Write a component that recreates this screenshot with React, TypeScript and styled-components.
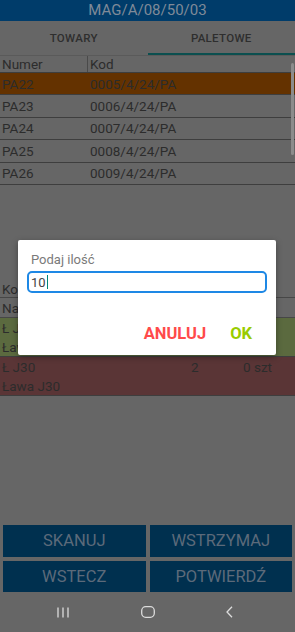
import { FC } from 'react';
import styled, { createGlobalStyle } from 'styled-components';

const GlobalStyle = createGlobalStyle`
  html, body {
    margin: 0;
    padding: 0;
    background: #666666;
    font-family: Roboto, "Liberation Sans", sans-serif;
  }
  * { box-sizing: border-box; }
`;

const Screen = styled.div`
  position: relative;
  width: 295px;
  height: 632px;
  display: flex;
  flex-direction: column;
  background: #666666;
  overflow: hidden;
`;

const TitleBar = styled.div`
  height: 21px;
  background: #003c6a;
  color: #7f8a98;
  font-size: 15px;
  line-height: 21px;
  text-align: center;
`;

const TabBar = styled.div`
  height: 35px;
  display: flex;
  border-bottom: 1px solid #5a5a5a;
`;

const Tab = styled.div<{ active?: boolean }>`
  flex: 1;
  display: flex;
  align-items: center;
  justify-content: center;
  padding-top: 2px;
  font-size: 11.5px;
  font-weight: 500;
  letter-spacing: 0.3px;
  color: #2e2e2e;
  border-bottom: 2px solid ${({ active }) => (active ? '#0b4f4f' : 'transparent')};
`;

const UpperList = styled.div`
  position: relative;
  height: 224px;
`;

const GridRow = styled.div<{ bg?: string; h?: number }>`
  display: grid;
  grid-template-columns: 88px 1fr;
  height: ${({ h }) => h || 22.4}px;
  align-items: center;
  background: ${({ bg }) => bg || 'transparent'};
  border-bottom: 1px solid #3e3e3e;
  color: #2c2c2c;
  font-size: 13.5px;
`;

const HeadCell = styled.div<{ sep?: boolean }>`
  height: 100%;
  display: flex;
  align-items: center;
  padding-left: 2px;
  border-right: ${({ sep }) => (sep ? '1px solid #4a4a4a' : 'none')};
`;

const Cell = styled.div`
  padding-left: 2px;
  white-space: nowrap;
`;

const ScrollThumb = styled.div`
  position: absolute;
  right: 1px;
  top: 7px;
  width: 3px;
  height: 92px;
  border-radius: 2px;
  background: #8c8c8c;
`;

const DetailHead = styled.div<{ h: number }>`
  height: ${({ h }) => h}px;
  display: flex;
  align-items: center;
  padding-left: 2px;
  border-bottom: 1px solid #474747;
  color: #2c2c2c;
  font-size: 13.5px;
`;

const ItemRow = styled.div<{ bg: string }>`
  height: 39px;
  display: grid;
  grid-template-columns: 1fr 52px 54px;
  grid-template-rows: 19px 19px;
  align-items: center;
  background: ${({ bg }) => bg};
  border-bottom: 1px solid #3e3e3e;
  color: #2c2c2c;
  font-size: 13.5px;
`;

const ItemName = styled.div`
  grid-column: 1 / 4;
  padding-left: 2px;
  white-space: nowrap;
`;

const Spacer = styled.div`
  flex: 1;
`;

const ButtonGrid = styled.div`
  display: grid;
  grid-template-columns: 1fr 1fr;
  grid-auto-rows: 31.5px;
  gap: 4px;
  padding: 0 3px;
`;

const ActionButton = styled.div`
  display: flex;
  align-items: center;
  justify-content: center;
  background: #00304f;
  color: #5c6a7a;
  font-size: 16.5px;
`;

const NavBar = styled.div`
  height: 40px;
  display: flex;
  align-items: center;
  justify-content: space-between;
  padding: 0 62px 0 57px;
`;

const Dialog = styled.div`
  position: absolute;
  top: 240px;
  left: 18px;
  width: 258px;
  height: 115px;
  background: #ffffff;
  border-radius: 2px;
  box-shadow: 0 2px 6px rgba(0, 0, 0, 0.35);
  padding: 12px 9px 0 9px;
  display: flex;
  flex-direction: column;
`;

const DialogLabel = styled.div`
  padding-left: 4px;
  font-size: 13px;
  color: #7a7a7a;
  line-height: 15px;
`;

const InputBox = styled.div`
  margin-top: 4px;
  height: 22px;
  border: 2px solid #1e88e5;
  border-radius: 5px;
  padding-left: 2px;
  display: flex;
  align-items: center;
  font-size: 13px;
  color: #444444;
`;

const Caret = styled.span`
  display: inline-block;
  width: 1.5px;
  height: 14px;
  margin-left: 1px;
  background: #008577;
`;

const DialogActions = styled.div`
  margin-top: 31px;
  display: flex;
  justify-content: flex-end;
  gap: 24px;
  padding-right: 15px;
`;

const DialogButton = styled.div<{ color: string }>`
  font-size: 16.5px;
  font-weight: 700;
  color: ${({ color }) => color};
`;

const pallets = [
  { num: 'PA22', code: '0005/4/24/PA' },
  { num: 'PA23', code: '0006/4/24/PA' },
  { num: 'PA24', code: '0007/4/24/PA' },
  { num: 'PA25', code: '0008/4/24/PA' },
  { num: 'PA26', code: '0009/4/24/PA' },
];

const icon = '#dcdcdc';

const App: FC = () => (
  <>
    <GlobalStyle />
    <Screen>
      <TitleBar>MAG/A/08/50/03</TitleBar>
      <TabBar>
        <Tab>TOWARY</Tab>
        <Tab active>PALETOWE</Tab>
      </TabBar>

      <UpperList>
        <GridRow h={17}>
          <HeadCell sep>Numer</HeadCell>
          <HeadCell>Kod</HeadCell>
        </GridRow>
        {pallets.map((p, i) => (
          <GridRow key={p.num} bg={i === 0 ? '#643200' : undefined}>
            <Cell>{p.num}</Cell>
            <Cell>{p.code}</Cell>
          </GridRow>
        ))}
        <ScrollThumb />
      </UpperList>

      <DetailHead h={18}>Kod</DetailHead>
      <DetailHead h={20}>Nazwa</DetailHead>
      <ItemRow bg="#5b6a3f">
        <ItemName>Ł J20</ItemName>
        <ItemName>Ława J20</ItemName>
      </ItemRow>
      <ItemRow bg="#5a3536">
        <Cell>Ł J30</Cell>
        <Cell>2</Cell>
        <Cell>0 szt</Cell>
        <ItemName>Ława J30</ItemName>
      </ItemRow>

      <Spacer />

      <ButtonGrid>
        <ActionButton>SKANUJ</ActionButton>
        <ActionButton>WSTRZYMAJ</ActionButton>
        <ActionButton>WSTECZ</ActionButton>
        <ActionButton>POTWIERDŹ</ActionButton>
      </ButtonGrid>

      <NavBar>
        <svg width="12" height="11" viewBox="0 0 12 11">
          <path d="M1 0.5v10M6 0.5v10M11 0.5v10" stroke={icon} strokeWidth="1.3" />
        </svg>
        <svg width="14" height="12" viewBox="0 0 14 12">
          <rect x="0.7" y="0.7" width="12.6" height="10.6" rx="4" fill="none" stroke={icon} strokeWidth="1.3" />
        </svg>
        <svg width="7" height="12" viewBox="0 0 7 12">
          <path d="M6 0.7L1 6l5 5.3" fill="none" stroke={icon} strokeWidth="1.3" />
        </svg>
      </NavBar>

      <Dialog>
        <DialogLabel>Podaj ilość</DialogLabel>
        <InputBox>
          10
          <Caret />
        </InputBox>
        <DialogActions>
          <DialogButton color="#ff4a4a">ANULUJ</DialogButton>
          <DialogButton color="#99cc00">OK</DialogButton>
        </DialogActions>
      </Dialog>
    </Screen>
  </>
);

export default App;
